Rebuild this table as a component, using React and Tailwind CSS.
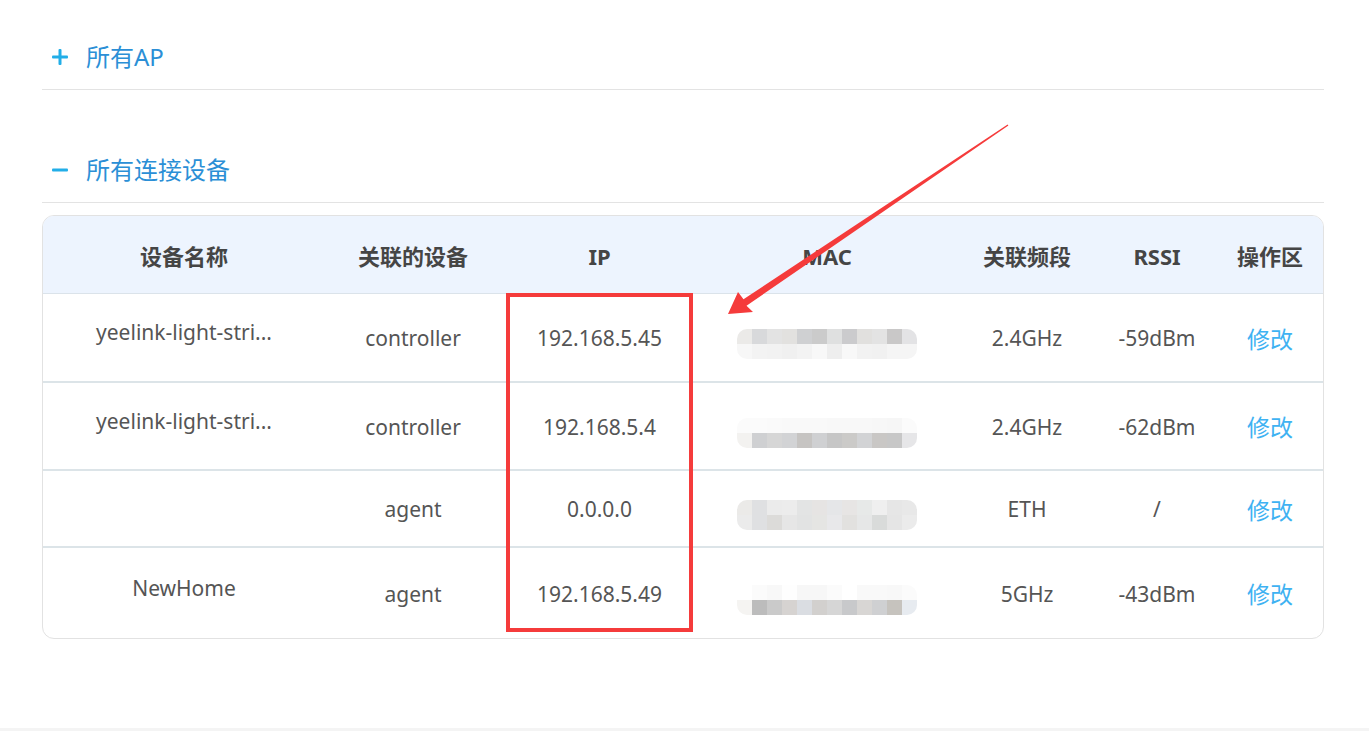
import React from "react";

const cols = "grid grid-cols-[282px_176px_197px_258px_142px_118px_108px]";

const headers = ["设备名称", "关联的设备", "IP", "MAC", "关联频段", "RSSI", "操作区"];

const rows = [
    { name: "yeelink-light-stri...", link: "controller", ip: "192.168.5.45", band: "2.4GHz", rssi: "-59dBm", h: "h-[89px]", blur: 0 },
    { name: "yeelink-light-stri...", link: "controller", ip: "192.168.5.4", band: "2.4GHz", rssi: "-62dBm", h: "h-[88px]", blur: 1 },
    { name: "", link: "agent", ip: "0.0.0.0", band: "ETH", rssi: "/", h: "h-[77px]", blur: 2 },
    { name: "NewHome", link: "agent", ip: "192.168.5.49", band: "5GHz", rssi: "-43dBm", h: "h-[90px]", blur: 3 },
];

// pixelated (mosaic) MAC values
const mosaic = [
    [
        ["bg-[#ebeae8]", "bg-[#d8d9db]", "bg-[#e3e3e3]", "bg-[#e2e1df]", "bg-[#cfd0d2]", "bg-[#cbcbcb]", "bg-[#dfe0e0]", "bg-[#cbcbcd]", "bg-[#e1e0de]", "bg-[#e3e3e3]", "bg-[#c9c8c8]", "bg-[#e3e3e5]"],
        ["bg-[#f7f7f7]", "bg-[#f3f3f3]", "bg-[#f2f2f2]", "bg-[#f0f0f0]", "bg-[#f3f3f3]", "bg-[#f8f8f8]", "bg-[#eeeeee]", "bg-[#f8f8f8]", "bg-[#f2f2f2]", "bg-[#f1f1f1]", "bg-[#f5f5f5]", "bg-[#f5f5f5]"],
    ],
    [
        ["bg-[#fbfbfb]", "bg-[#fbfbfb]", "bg-[#fafafa]", "bg-[#f9f9f9]", "bg-[#f9f9f9]", "bg-[#f9f9f9]", "bg-[#f8f8f8]", "bg-[#f8f8f8]", "bg-[#f8f8f8]", "bg-[#f7f7f7]", "bg-[#f6f6f6]", "bg-[#fbfbfb]"],
        ["bg-[#f3f2f0]", "bg-[#cfd0d2]", "bg-[#d6d6d6]", "bg-[#d2d3d5]", "bg-[#c6c4c2]", "bg-[#cfd0d2]", "bg-[#c6c6c6]", "bg-[#cbcac8]", "bg-[#d2d3d5]", "bg-[#c9c7c5]", "bg-[#c7c7c7]", "bg-[#e6e6e8]"],
    ],
    [
        ["bg-[#ebeae8]", "bg-[#dfe0e2]", "bg-[#ebebeb]", "bg-[#ececec]", "bg-[#e3e4e4]", "bg-[#e6e4e3]", "bg-[#e5e6e8]", "bg-[#e7e5e4]", "bg-[#e7e9e8]", "bg-[#efefef]", "bg-[#e6e6e6]", "bg-[#e8e8e8]"],
        ["bg-[#ebebeb]", "bg-[#dfe0e2]", "bg-[#dcdbd9]", "bg-[#e6e6e6]", "bg-[#e2e3e3]", "bg-[#e5e5e3]", "bg-[#e8e8ea]", "bg-[#e2e1df]", "bg-[#e6e7e7]", "bg-[#d9dbda]", "bg-[#e5e5e5]", "bg-[#ebebeb]"],
    ],
    [
        ["bg-[#ffffff]", "bg-[#fbfbfb]", "bg-[#f8f8f8]", "bg-[#fefefe]", "bg-[#f7f7f7]", "bg-[#f7f7f7]", "bg-[#fbfbfb]", "bg-[#ffffff]", "bg-[#f9f9f9]", "bg-[#f9f9f9]", "bg-[#f8f8f8]", "bg-[#fbfbfb]"],
        ["bg-[#f5f4f2]", "bg-[#bcbcbc]", "bg-[#cacaca]", "bg-[#d6d3d1]", "bg-[#dadde2]", "bg-[#d2d0ce]", "bg-[#d6d6d6]", "bg-[#c8c9cb]", "bg-[#d8d6d4]", "bg-[#cfd0d2]", "bg-[#c6c3be]", "bg-[#e7ebf0]"],
    ],
];

function Mosaic({ idx }) {
    return (
        <div className="flex flex-col rounded-[10px] overflow-hidden mt-[10px]">
            {mosaic[idx].map((line, i) => (
                <div key={i} className="flex">
                    {line.map((c, j) => (
                        <div key={j} className={`w-[15px] h-[15px] ${c}`} />
                    ))}
                </div>
            ))}
        </div>
    );
}

function Section({ open, title }) {
    return (
        <div className="flex items-center h-[65px] border-b border-[#e3e3e3] pl-[10px]">
            <span className="w-[16px] flex justify-center text-[#22aee8]">
                {open ? (
                    <svg width="16" height="16" viewBox="0 0 16 16"><rect x="0" y="6.5" width="16" height="3" rx="1" fill="currentColor" /></svg>
                ) : (
                    <svg width="16" height="16" viewBox="0 0 16 16"><rect x="0" y="6.5" width="16" height="3" rx="1" fill="currentColor" /><rect x="6.5" y="0" width="3" height="16" rx="1" fill="currentColor" /></svg>
                )}
            </span>
            <span className="ml-[18px] text-[24px] text-[#2b8fd6]">{title}</span>
        </div>
    );
}

export default function App() {
    return (
        <div className="relative w-[1369px] h-[731px] flex flex-col bg-white overflow-hidden font-['Noto_Sans','Noto_Sans_CJK_SC',sans-serif]">
            <div className="flex-1 pl-[42px] pr-[45px] pt-[25px]">
                <Section open={false} title="所有AP" />
                <div className="mt-[48px]">
                    <Section open title="所有连接设备" />
                </div>

                <div className="mt-[12px] border border-[#e2e2e2] rounded-[12px] overflow-hidden">
                    <div className={`${cols} h-[78px] pt-[3px] bg-[#edf4fe] border-b border-[#dbe3ea] text-[22px] font-bold text-[#454545]`}>
                        {headers.map((h) => (
                            <div key={h} className="flex items-center justify-center">{h}</div>
                        ))}
                    </div>
                    {rows.map((r, i) => (
                        <div
                            key={i}
                            className={`${cols} ${r.h} pt-[3px] ${i < rows.length - 1 ? "border-b-2 border-[#dce4e8]" : ""} text-[21px] text-[#555]`}
                        >
                            <div className="flex items-center justify-center pb-[12px]">{r.name}</div>
                            <div className="flex items-center justify-center">{r.link}</div>
                            <div className="flex items-center justify-center">{r.ip}</div>
                            <div className="flex items-center justify-center">
                                <Mosaic idx={r.blur} />
                            </div>
                            <div className="flex items-center justify-center">{r.band}</div>
                            <div className="flex items-center justify-center">{r.rssi}</div>
                            <div className="flex items-center justify-center text-[23px] text-[#3fb2f2] cursor-pointer">修改</div>
                        </div>
                    ))}
                </div>
            </div>
            <div className="h-[3px] bg-[#f4f4f4]" />

            {/* annotation: red box around IP column */}
            <div className="absolute left-[506px] top-[293px] w-[187px] h-[339px] border-4 border-[#f53b3b]" />

            {/* annotation: arrow */}
            <svg className="absolute left-0 top-0 pointer-events-none" width="1369" height="731">
                <polygon
                    points="728,314 738,292 743.5,299.2 1007.6,124.6 1008.4,125.4 746.5,305.8 753,312"
                    fill="#f53b3b"
                />
            </svg>
        </div>
    );
}
